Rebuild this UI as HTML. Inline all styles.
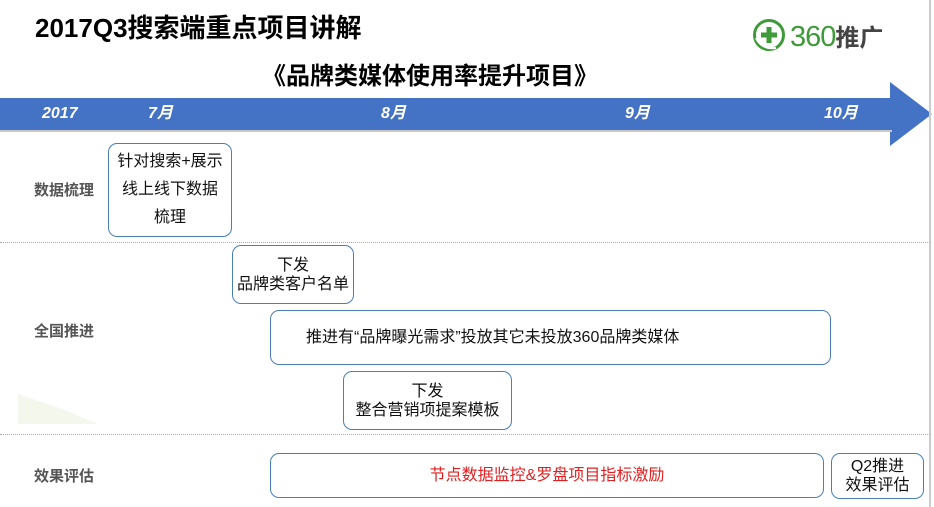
<!DOCTYPE html>
<html><head><meta charset="utf-8"><style>
*{margin:0;padding:0;box-sizing:border-box}
body{width:934px;height:507px;background:#fff;position:relative;overflow:hidden;font-family:"Liberation Sans","Noto Sans CJK SC",sans-serif;color:#111}
.a{position:absolute;white-space:nowrap}
.box{position:absolute;border:1.5px solid #4a7fb5;border-radius:9px;display:flex;flex-direction:column;align-items:center;justify-content:center;text-align:center;font-size:16px;line-height:19px;color:#111;background:#fff}
.lab{position:absolute;left:34px;font-size:15px;line-height:18px;font-weight:bold;color:#555}
.tl{position:absolute;top:104px;line-height:20px;height:20px;color:#fff;font-weight:bold;font-style:italic;font-size:16px}
.dot{position:absolute;left:0;width:930px;border-top:1.5px dotted #aaa}
</style></head><body>
<div class="a" style="left:35px;top:8px;font-size:26px;font-weight:bold;color:#000">2017Q3搜索端重点项目讲解</div>
<div class="a" style="left:262px;top:56px;font-size:24px;font-weight:bold;color:#000">《品牌类媒体使用率提升项目》</div>
<svg class="a" style="left:752px;top:18px" width="34" height="34" viewBox="0 0 34 34"><circle cx="17" cy="17" r="14.5" fill="none" stroke="#3f9a3a" stroke-width="3"/><path d="M4 20 Q10 32 24 30" stroke="#fff" stroke-width="2" fill="none"/><rect x="14.5" y="9" width="5" height="16" fill="#3f9a3a"/><rect x="9" y="14.5" width="16" height="5" fill="#3f9a3a"/></svg>
<div class="a" style="left:790px;top:19px;font-size:29px;line-height:36px;color:#3f9a3a;letter-spacing:-1px">360<span style="color:#444;font-weight:bold;font-size:24px;letter-spacing:0">推广</span></div>
<div class="a" style="left:0;top:98px;width:892px;height:32px;background:#4472c4"></div>
<svg class="a" style="left:888px;top:82px" width="46" height="66"><polygon points="2,0 44,32 2,64" fill="#4472c4"/></svg>
<div class="a" style="left:0;top:130px;width:892px;height:2px;background:#c8c8c8"></div>
<div class="tl" style="left:42px">2017</div>
<div class="tl" style="left:148px">7月</div>
<div class="tl" style="left:381px">8月</div>
<div class="tl" style="left:625px">9月</div>
<div class="tl" style="left:824px">10月</div>
<div class="a" style="left:929px;top:0;width:2px;height:507px;background:#ccc"></div>
<div class="dot" style="top:242px"></div>
<div class="dot" style="top:434px"></div>
<svg class="a" style="left:18px;top:394px" width="80" height="30"><polygon points="0,0 44,15 80,30 0,30" fill="#f3f7ec"/></svg>
<div class="lab" style="top:182px">数据梳理</div>
<div class="lab" style="top:323px">全国推进</div>
<div class="lab" style="top:468px">效果评估</div>
<div class="box" style="left:108px;top:143px;width:124px;height:94px;line-height:28px">针对搜索+展示<br>线上线下数据<br>梳理</div>
<div class="box" style="left:232px;top:245px;width:122px;height:59px">下发<br>品牌类客户名单</div>
<div class="box" style="left:270px;top:310px;width:561px;height:55px;align-items:flex-start;padding-left:35px">推进有“品牌曝光需求”投放其它未投放360品牌类媒体</div>
<div class="box" style="left:343px;top:371px;width:169px;height:59px">下发<br>整合营销项提案模板</div>
<div class="box" style="left:270px;top:453px;width:554px;height:45px;color:#e02020">节点数据监控&amp;罗盘项目指标激励</div>
<div class="box" style="left:831px;top:453px;width:93px;height:46px">Q2推进<br>效果评估</div>
</body></html>
